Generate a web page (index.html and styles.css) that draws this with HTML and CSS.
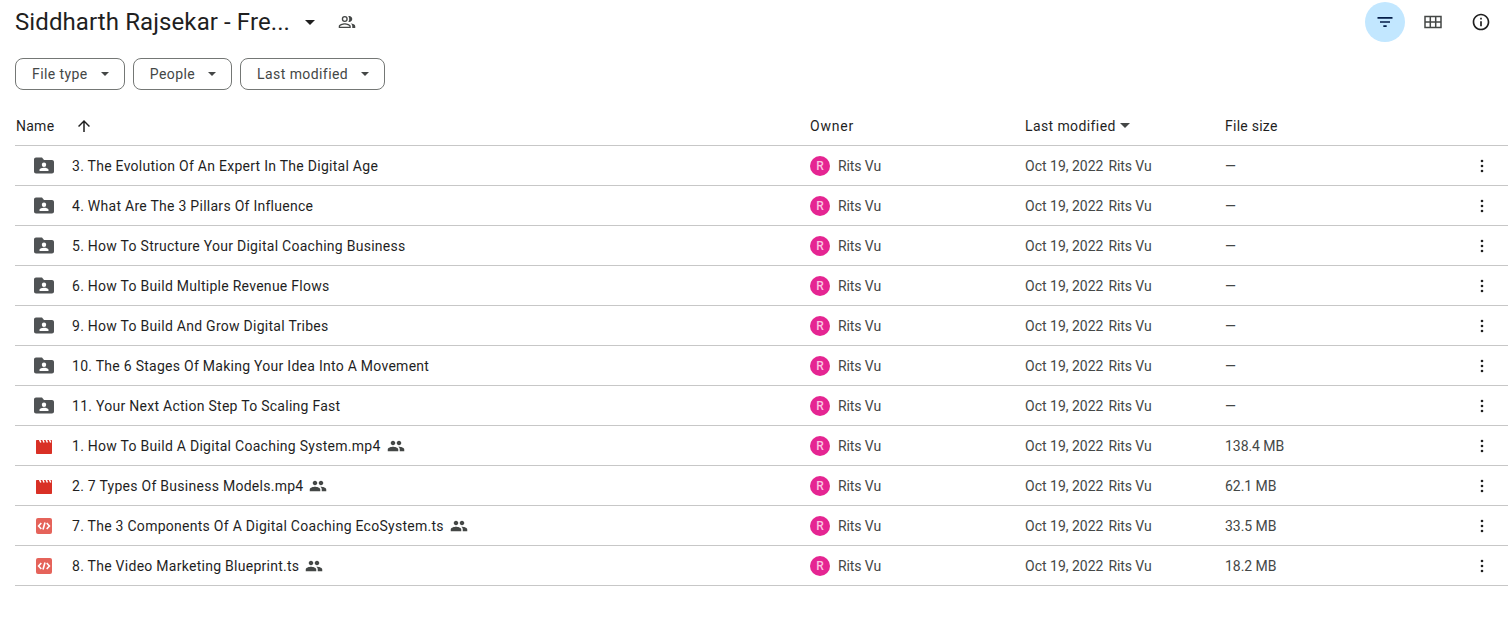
FILE: index.html
```html
<!DOCTYPE html>
<html lang="en">
<head>
  <meta charset="UTF-8" />
  <title>Siddharth Rajsekar - Free - Google Drive</title>
  <link rel="stylesheet" href="styles.css">
</head>
<body>
  <svg class="sprites" width="0" height="0">
    <defs>
      <symbol id="i-folder" viewBox="0 0 20 20"><path d="M8 1.500H2C.9 1.500 0 2.400 0 3.500v12c0 1.100.9 2 2 2h16c1.100 0 2-.9 2-2v-9.500c0-1.100-.9-2-2-2h-8l-2-2.500zM10 6.500a2.200 2.200 0 1 1 0 4.400 2.200 2.200 0 0 1 0-4.400zM14.500 15h-9v-1.200c0-1.400 3-2.100 4.500-2.100s4.500.7 4.500 2.100V15z" fill="#505355" fill-rule="evenodd"/></symbol>
      <symbol id="i-video" viewBox="0 0 16 16"><path d="M1 2h14c.6 0 1 .4 1 1v12c0 .6-.4 1-1 1H1c-.6 0-1-.4-1-1V3c0-.6.4-1 1-1z" fill="#d93025"/><path d="M3.500 1.500l1.300 3M6.800 1.500l1.300 3M10.100 1.500l1.300 3M13.400 1.500l1.300 3" stroke="#fff" stroke-width="1.500" fill="none"/></symbol>
      <symbol id="i-code" viewBox="0 0 16 16"><rect width="16" height="16" rx="2" fill="#e5635a"/><path d="M5.300 5 2.600 8l2.700 3M10.700 5l2.700 3-2.700 3M9 4.500 7 11.500" fill="none" stroke="#fff" stroke-width="1.600"/></symbol>
      <symbol id="i-shared" viewBox="0 0 24 24"><path d="M16 11c1.660 0 2.990-1.340 2.990-3S17.660 5 16 5s-3 1.340-3 3 1.340 3 3 3zm-8 0c1.660 0 2.990-1.340 2.990-3S9.660 5 8 5 5 6.340 5 8s1.340 3 3 3zm0 2c-2.330 0-7 1.170-7 3.500V19h14v-2.500C15 14.170 10.330 13 8 13zm8 0c-.29 0-.62.020-.97.050 1.160.84 1.970 1.970 1.970 3.450V19h6v-2.500c0-2.330-4.670-3.500-7-3.500z" fill="#444746"/></symbol>
      <symbol id="i-more" viewBox="0 0 20 20"><circle cx="10" cy="5" r="1.300" fill="#1f1f1f"/><circle cx="10" cy="10" r="1.300" fill="#1f1f1f"/><circle cx="10" cy="15" r="1.300" fill="#1f1f1f"/></symbol>
      <symbol id="i-caret" viewBox="0 0 10 5"><path d="M0 0l5 5 5-5z"/></symbol>
    </defs>
  </svg>

  <header class="top-bar">
    <div class="title-wrap">
      <h1 class="title">Siddharth Rajsekar - Fre...</h1>
      <svg class="caret title-caret"><use href="#i-caret"/></svg>
      <svg class="manage-icon" viewBox="0 0 24 24"><path d="M9 12a4 4 0 1 0 0-8 4 4 0 0 0 0 8zm0-6.200a2.200 2.200 0 1 1 0 4.400 2.200 2.200 0 0 1 0-4.400zM9 13.500c-2.700 0-8 1.300-8 4V20h16v-2.500c0-2.700-5.300-4-8-4zm-6.200 4.700v-.7c0-.7 3.400-2.200 6.200-2.200s6.200 1.500 6.200 2.200v.7H2.800zM15 12c2.200 0 4-1.800 4-4s-1.800-4-4-4c-.5 0-.9.100-1.300.2.800 1 1.300 2.400 1.300 3.800s-.5 2.800-1.300 3.800c.4.100.8.200 1.300.2zm1.700 1.700c1.400.9 2.300 2.200 2.300 3.800V20h4v-2.500c0-2.100-3.200-3.300-6.300-3.800z" fill="#444746"/></svg>
    </div>
    <div class="view-actions">
      <button class="round-btn is-active">
        <svg viewBox="0 0 24 24"><path d="M10 18h4v-2h-4v2zM3 6v2h18V6H3zm3 7h12v-2H6v2z" fill="#041e49"/></svg>
      </button>
      <button class="round-btn">
        <svg viewBox="0 0 20 20"><path d="M2 4.500h16v11H2zM7.300 4.500v11M12.700 4.500v11M2 10h16" fill="none" stroke="#444746" stroke-width="1.500"/></svg>
      </button>
      <button class="round-btn">
        <svg viewBox="0 0 24 24"><path d="M11 7h2v2h-2V7zm0 4h2v6h-2v-6zm1-9C6.480 2 2 6.480 2 12s4.480 10 10 10 10-4.480 10-10S17.520 2 12 2zm0 18c-4.410 0-8-3.590-8-8s3.590-8 8-8 8 3.590 8 8-3.590 8-8 8z" fill="#1f1f1f"/></svg>
      </button>
    </div>
  </header>

  <div class="filters">
    <button class="chip">File type <svg class="caret"><use href="#i-caret"/></svg></button>
    <button class="chip">People <svg class="caret"><use href="#i-caret"/></svg></button>
    <button class="chip">Last modified <svg class="caret"><use href="#i-caret"/></svg></button>
  </div>

  <main class="file-list">
    <div class="row head-row">
      <div class="name-head">Name
        <svg class="sort-arrow" viewBox="0 0 24 24"><path d="M4 12l1.410 1.410L11 7.830V20h2V7.830l5.580 5.590L20 12l-8-8-8 8z" fill="#1f1f1f"/></svg>
      </div>
      <div class="owner-head">Owner</div>
      <div class="modified-head">Last modified <svg class="caret"><use href="#i-caret"/></svg></div>
      <div>File size</div>
      <div></div>
    </div>
    <div id="rows"></div>
  </main>

  <script>
    var files = [
      { name: '3. The Evolution Of An Expert In The Digital Age', icon: 'folder', size: '—' },
      { name: '4. What Are The 3 Pillars Of Influence', icon: 'folder', size: '—' },
      { name: '5. How To Structure Your Digital Coaching Business', icon: 'folder', size: '—' },
      { name: '6. How To Build Multiple Revenue Flows', icon: 'folder', size: '—' },
      { name: '9. How To Build And Grow Digital Tribes', icon: 'folder', size: '—' },
      { name: '10. The 6 Stages Of Making Your Idea Into A Movement', icon: 'folder', size: '—' },
      { name: '11. Your Next Action Step To Scaling Fast', icon: 'folder', size: '—' },
      { name: '1. How To Build A Digital Coaching System.mp4', icon: 'video', size: '138.4 MB', shared: true },
      { name: '2. 7 Types Of Business Models.mp4', icon: 'video', size: '62.1 MB', shared: true },
      { name: '7. The 3 Components Of A Digital Coaching EcoSystem.ts', icon: 'code', size: '33.5 MB', shared: true },
      { name: '8. The Video Marketing Blueprint.ts', icon: 'code', size: '18.2 MB', shared: true }
    ];

    var html = '';
    files.forEach(function (f) {
      html += `
        <div class="row file-row">
          <div class="name-cell">
            <svg class="file-icon icon-${f.icon}"><use href="#i-${f.icon}"/></svg>
            <span class="file-name">${f.name}</span>
            ${f.shared ? '<svg class="shared-icon"><use href="#i-shared"/></svg>' : ''}
          </div>
          <div class="owner-cell"><span class="avatar">R</span>Rits Vu</div>
          <div class="modified-cell"><span>Oct 19, 2022</span><span>Rits Vu</span></div>
          <div class="size-cell">${f.size}</div>
          <div class="more-cell"><svg class="more-icon"><use href="#i-more"/></svg></div>
        </div>`;
    });
    document.getElementById('rows').innerHTML = html;
  </script>
</body>
</html>
```

FILE: styles.css
```css
html, body {
  margin: 0;
  padding: 0;
  height: 100%;
  background: #fff;
  overflow: hidden;
  font-family: Roboto, "Open Sans", sans-serif;
  font-size: 14px;
  color: #444746;
}

.sprites {
  position: absolute;
}

button {
  font-family: inherit;
  background: none;
  cursor: pointer;
}

.caret {
  width: 10px;
  height: 5px;
  fill: #444746;
}

/* top bar */
.top-bar {
  display: flex;
  justify-content: space-between;
  align-items: center;
  height: 40px;
  padding: 2px 9px 0 15px;
}

.title-wrap {
  display: flex;
  align-items: center;
}

.title {
  margin: 0;
  font-size: 24px;
  font-weight: 400;
  color: #1f1f1f;
  letter-spacing: 0.1px;
}

.title-caret {
  margin-left: 15px;
  fill: #1f1f1f;
}

.manage-icon {
  width: 18px;
  height: 18px;
  margin-left: 23px;
}

.view-actions {
  display: flex;
  gap: 8px;
}

.round-btn {
  display: flex;
  align-items: center;
  justify-content: center;
  width: 40px;
  height: 40px;
  border: 0;
  padding: 0;
  border-radius: 50%;
}

.round-btn svg {
  width: 20px;
  height: 20px;
}

.is-active {
  background: #c2e7ff;
}

/* filter chips */
.filters {
  display: flex;
  gap: 8px;
  margin-top: 16px;
  padding-left: 15px;
}

.chip {
  display: flex;
  align-items: center;
  height: 32px;
  padding: 0 15px 0 16px;
  border: 1px solid #747775;
  border-radius: 8px;
  font-size: 14px;
  letter-spacing: 0.42px;
  color: #444746;
  gap: 13px;
}

.chip .caret {
  width: 8px;
  height: 4px;
}

/* list */
.file-list {
  margin: 0 2px 0 15px;
  padding-top: 16px;
}

.row {
  display: grid;
  grid-template-columns: 795px 215px 200px 1fr 54px;
  align-items: center;
  border-bottom: 1px solid #c7c7c7;
  box-sizing: border-box;
}

.head-row {
  height: 40px;
  color: #1f1f1f;
  letter-spacing: 0.25px;
}

.name-head {
  display: flex;
  align-items: center;
  padding-left: 1px;
}

.sort-arrow {
  width: 18px;
  height: 18px;
  margin-left: 21px;
}

.owner-head {
  letter-spacing: 0.8px;
}

.modified-head {
  display: flex;
  align-items: center;
  gap: 4px;
  letter-spacing: 0.4px;
}

.file-row {
  height: 40px;
}

.name-cell {
  display: flex;
  align-items: center;
  color: #1f1f1f;
  padding-left: 19px;
  letter-spacing: 0.27px;
}

.file-icon {
  flex: none;
  width: 20px;
  height: 20px;
  margin-right: 18px;
}

.icon-video, .icon-code {
  width: 16px;
  height: 16px;
  margin: 0 20px 0 2px;
}

.shared-icon {
  width: 18px;
  height: 18px;
  margin-left: 6px;
}

.owner-cell {
  display: flex;
  align-items: center;
  gap: 8px;
  letter-spacing: -0.1px;
}

.avatar {
  display: flex;
  align-items: center;
  justify-content: center;
  width: 20px;
  height: 20px;
  border-radius: 50%;
  background: #e52592;
  color: #fbc4e0;
  font-size: 12px;
  font-weight: 500;
}

.modified-cell {
  display: flex;
  gap: 5px;
}

.modified-cell span:last-child {
  letter-spacing: -0.1px;
}

.size-cell {
  letter-spacing: -0.05px;
}

.more-cell {
  display: flex;
  padding-left: 18px;
}

.more-icon {
  width: 20px;
  height: 20px;
}
```
